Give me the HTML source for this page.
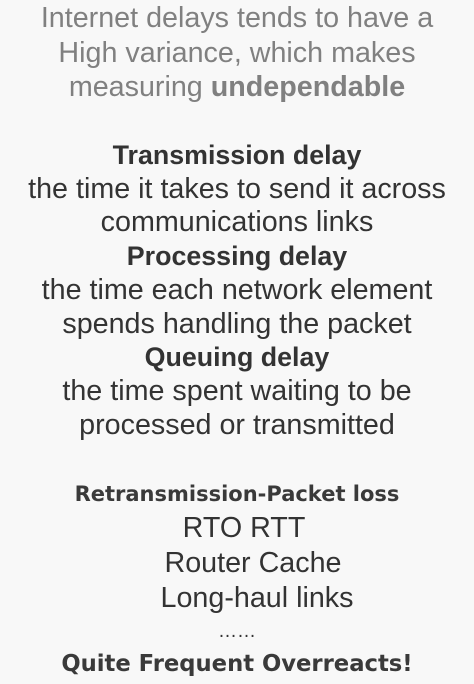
<!DOCTYPE html>
<html><head><style>
html,body{margin:0;padding:0;}
body{width:474px;height:684px;background:#f8f8f8;position:relative;overflow:hidden;font-family:"Liberation Sans",Arial,sans-serif;color:#333;}
.l{position:absolute;left:0;width:474px;text-align:center;height:34px;line-height:34px;font-size:28.7px;white-space:pre;box-sizing:border-box;}
.g{color:#808080;}
.b{font-weight:bold;font-size:26.8px;}
.c{font-weight:bold;font-family:"DejaVu Sans","Liberation Sans",sans-serif;font-size:21px;color:#3a3a3a;}
</style></head><body>
<div class="l g" style="top:1px">Internet delays tends to have a</div>
<div class="l g" style="top:36px">High variance, which makes</div>
<div class="l g" style="top:70px">measuring <b>undependable</b></div>
<div class="l b" style="top:138px">Transmission delay</div>
<div class="l" style="top:172px">the time it takes to send it across</div>
<div class="l" style="top:205px">communications links</div>
<div class="l b" style="top:239px">Processing delay</div>
<div class="l" style="top:273px">the time each network element</div>
<div class="l" style="top:307px">spends handling the packet</div>
<div class="l b" style="top:340px">Queuing delay</div>
<div class="l" style="top:374px">the time spent waiting to be</div>
<div class="l" style="top:408px">processed or transmitted</div>
<div class="l c" style="top:477px">Retransmission-Packet loss</div>
<div class="l" style="top:511px;padding-left:14px">RTO RTT</div>
<div class="l" style="top:546px;padding-left:32px">Router Cache</div>
<div class="l" style="top:581px;padding-left:40px">Long-haul links</div>
<div class="l" style="top:615px;font-size:19px">……</div>
<div class="l c" style="top:647px;font-size:22.7px">Quite Frequent Overreacts!</div>
</body></html>
